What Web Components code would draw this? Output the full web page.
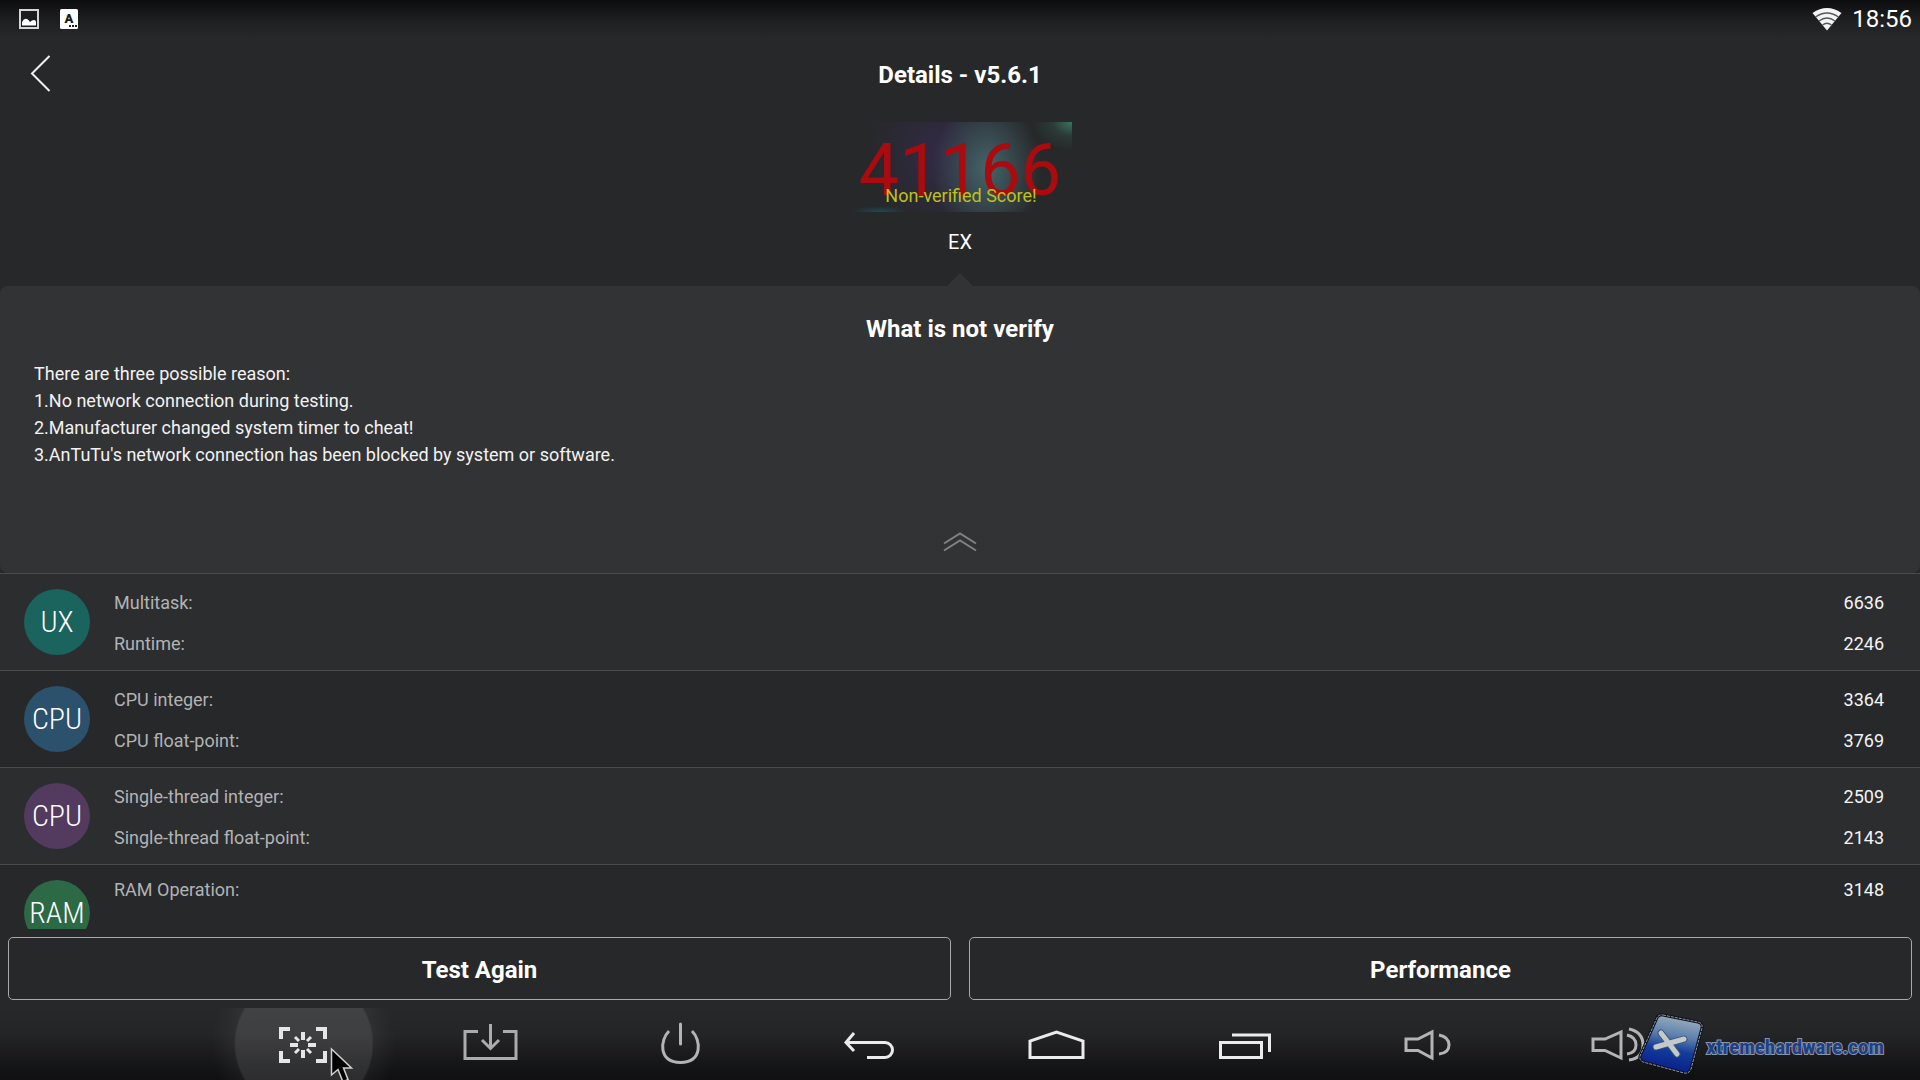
<!DOCTYPE html>
<html lang="en">
<head>
<meta charset="utf-8">
<title>Details - v5.6.1</title>
<style>
html, body { margin: 0; height: 100%; background: #27282a; }
body { font-family: Roboto, "Liberation Sans", sans-serif; color: #fff; overflow: hidden; }
</style>
</head>
<body>
<benchmark-app></benchmark-app>
<script>
const define = (tag, css, html) => customElements.define(tag, class extends HTMLElement {
  constructor() {
    super();
    const t = document.createElement('template');
    t.innerHTML = `<style>*{box-sizing:border-box}svg{display:block}${css}</style>${typeof html === 'function' ? html(this) : html}`;
    this.attachShadow({ mode: 'open' }).append(t.content.cloneNode(true));
  }
});

define('status-bar', `
:host{display:flex;align-items:center;justify-content:space-between;height:38px;flex:none;padding:0 8px 0 18px;
 background:linear-gradient(#0d0d0f,#1d1e20 50%,#27282a)}
div{display:flex;align-items:center}
.left{gap:20px}.right{gap:10px}
time{font-size:24px;line-height:38px}
`, `
<div class="left">
 <svg width="22" height="22" viewBox="0 0 22 22" aria-hidden="true"><rect x="2" y="2" width="18" height="18" fill="#1b1c1e" stroke="#d6d6d6" stroke-width="2"/><path d="M4 17.500V14q2-4 5-3 2 1 3 3 2-2 4-2 2 0 2 3v2.500z" fill="#fff"/></svg>
 <svg width="18" height="20" viewBox="0 0 18 20" aria-hidden="true"><rect width="18" height="20" rx="1.500" fill="#fff"/><text x="9" y="14" font-size="13" font-weight="900" fill="#1a1b1d" text-anchor="middle">A</text><path d="M9 17h2m1 0h2m1 0h2" stroke="#222" stroke-width="2"/></svg>
</div>
<div class="right">
 <svg width="30" height="24" viewBox="0 0 30 24" aria-hidden="true"><path d="M.5 6Q15-4 29.500 6L15 23.500z" fill="#f4f4f4"/><g fill="none" stroke="#55565a" stroke-width="1.300"><path d="M3.500 10Q15 2 26.500 10"/><path d="M7 14Q15 8 23 14"/><path d="M10.500 18Q15 14.500 19.500 18"/></g></svg>
 <time>18:56</time>
</div>`);

define('page-header', `
:host{display:grid;grid-template-columns:80px 1fr 80px;align-items:center;height:72px;flex:none}
button{background:none;border:0;padding:0 0 2px 30px;height:72px;color:inherit}
h1{margin:0;padding-top:2px;text-align:center;font-size:24px;line-height:32px;font-weight:700}
`, `
<button aria-label="Back"><svg width="22" height="38" viewBox="0 0 22 38" fill="none" stroke="#f0f0f0" stroke-width="2"><path d="M19.500 2L2 19.500 19.500 37"/></svg></button>
<h1><slot></slot></h1>`);

define('score-banner', `
:host{display:flex;flex-direction:column;align-items:center;flex:none;padding-top:12px}
.art{display:grid;width:224px;height:90px;justify-items:center;
 background:
 radial-gradient(ellipse 40px 28px at 100% 0,#39755f,#2f4d4480 50%,transparent),
 radial-gradient(ellipse 28px 6px at 14% 100%,#1d4a57,transparent),
 radial-gradient(ellipse 54px 72px at 62% 52%,#466468,#3b5257cc 45%,transparent),
 radial-gradient(ellipse 76px 80px at 42% 35%,#322a46,transparent)}
.art>*{grid-area:1/1}
strong{font-size:72px;line-height:98px;font-weight:400;color:#a90b0e}
span{font-size:18px;line-height:20px;color:#c0c01c;align-self:end;padding:0 0 14px 2px}
p{margin:0;font-size:20px;line-height:60px}
i{width:26px;height:13px;margin-top:1px;background:#323335;clip-path:polygon(50% 0,100% 100%,0 100%)}
`, `<div class="art"><strong><slot name="score"></slot></strong><span><slot name="note"></slot></span></div><p><slot name="device"></slot></p><i></i>`);

define('info-panel', `
:host{display:flex;flex-direction:column;flex:none;padding:24px 34px 9px;background:#323335;border-radius:8px}
h2{margin:0 0 12px;text-align:center;font-size:24px;line-height:38px;font-weight:700}
.text{font-size:18px;line-height:27px;color:#f2f2f2}
button{align-self:center;margin-top:52px;width:60px;height:44px;padding:0;background:none;border:0}
svg{margin:auto}
`, `<h2><slot name="title"></slot></h2><div class="text"><slot></slot></div>
<button aria-label="Collapse"><svg width="34" height="20" viewBox="0 0 34 20" fill="none" stroke="#808183" stroke-width="2"><path d="M1 11.500L17 1.500 33 11.500M1 18.500L17 8.500 33 18.500"/></svg></button>`);

define('score-row', `
:host{display:flex;align-items:flex-start;flex:none;border-top:1px solid #4b4c4e;padding:0 36px 0 24px;min-height:97px;background:#27282a}
:host([shade]){background:#2c2d2f}
.badge{width:66px;height:66px;margin:15px 24px 0 0;border-radius:50%;background:var(--tone);flex:none;
 font:300 30px/66px "Roboto Condensed",Roboto,sans-serif;display:flex;justify-content:center}
dl{flex:1;margin:0;padding-top:8px}
:host([tight]) dl{padding-top:4px}
dl div{display:flex;justify-content:space-between;font-size:18px;line-height:41px}
dt{color:#b2b3b4}dd{margin:0;color:#f4f4f4}
`, el => `<span class="badge">${el.getAttribute('badge')}</span><dl>${el.getAttribute('items').split('|').map(s => { const [k, v] = s.split('='); return `<div><dt>${k}:</dt><dd>${v}</dd></div>`; }).join('')}</dl>`);

define('score-list', `:host{display:flex;flex-direction:column;flex:1;min-height:0;overflow:hidden}`, `<slot></slot>`);

define('action-bar', `
:host{display:flex;gap:18px;padding:8px;flex:none}
button{flex:1;height:63px;padding:2px 0 0;border:1px solid #a8a9aa;border-radius:5px;background:none;color:#fff;font:700 24px/32px Roboto,"Liberation Sans",sans-serif}
`, `<button>Test Again</button><button>Performance</button>`);

const icon = (label, tone, body, cls = '') => `<button aria-label="${label}" class="${cls}"><svg width="72" height="72" viewBox="-36 -36 72 72" fill="none" stroke="${tone}" stroke-width="3">${body}</svg></button>`;
define('nav-bar', `
:host{display:flex;justify-content:center;height:72px;flex:none;overflow:hidden;background:linear-gradient(#27282a,#242527 35%,#121214 90%,#101012)}
button{flex:0 1 188px;height:72px;padding:0;border:0;background:none;display:flex;justify-content:center}
.active{background:radial-gradient(circle at 51% 50%,#ffffff1f 67px,#ffffff1f 68px,#ffffff0b 70px,transparent 92px)}
`,
 icon('Screenshot', '#e6e6e6', `<path d="M-21-5v-10h9M14-15h9v10M23 7v10h-9M-12 17h-9V7" stroke-width="4"/><path d="M1-12v8M1 6v8M-12 1h8M6 1h8" stroke-width="4"/><path d="M-7-7l4 4M9-7l-4 4M-7 9l4-4M9 9l-4-4"/>`, 'active')
 + icon('Save', '#acacac', `<path d="M-12-12.500h-13v27h51v-27h-13M.500-20V4M-8-4L.500 4.500 9-4"/>`)
 + icon('Power', '#b4b4b4', `<path d="M-9-13C-18-4-20 18 2.500 18.500 25 18 23-4 14-13"/><path d="M2.500-20V0" stroke-linecap="round"/>`)
 + icon('Back', '#ebebeb', `<path d="M-12-11L-20-1.500-12 7M-20-1.500H19a7.500 7.500 0 0 1 0 15H1"/>`)
 + icon('Home', '#ebebeb', `<path d="M-24 13.500V-3L2.500-12 29-3V13.500z"/>`)
 + icon('Recent apps', '#ebebeb', `<path d="M-21.500-1.500h41v15h-41zM-10-9H27.500V8"/>`)
 + icon('Volume down', '#b4b4b4', `<path d="M-24-5h12L2-12v26L-12 6.500h-12zM9-9Q19-7 19 1T9 10"/>`)
 + icon('Volume up', '#b4b4b4', `<path d="M-25-5h12L3-12v26L-13 6.500h-12zM9-9Q18-7 18 1T9 10M11-15Q25-12 25 1T11 16"/>`));

define('site-mark', `
:host{position:absolute;right:36px;bottom:0;display:flex;align-items:center;gap:2px;height:72px}
span{font:700 21px/24px "Roboto Condensed",Roboto,sans-serif;color:#1c3f86;-webkit-text-stroke:2px #8a94a8;paint-order:stroke fill;padding-top:6px}
`, `<svg width="66" height="72" viewBox="0 0 66 72" aria-hidden="true">
<defs><linearGradient id="g" x1=".6" y1="0" x2=".4" y2="1"><stop offset="0" stop-color="#9fb0bd"/><stop offset=".35" stop-color="#5b80ae"/><stop offset=".6" stop-color="#123c9a"/><stop offset="1" stop-color="#071a8c"/></linearGradient></defs>
<path d="M25 7L60 14Q65 15 64 20L53 61Q51 66 46 65L5 54Q1 52 2 48L18 12Q20 6 25 7z" fill="url(#g)" stroke="#10131c" stroke-width="3"/>
<path d="M25 7L60 14Q65 15 64 20L53 61Q51 66 46 65L5 54Q1 52 2 48L18 12Q20 6 25 7z" fill="none" stroke="#8b96aa" stroke-width="1" stroke-dasharray="3 1"/>
<path d="M23 25L39 46M18 39L46 31" stroke="#3c5576" stroke-width="7" stroke-linecap="round"/><path d="M23 25L39 46M18 39L46 31" stroke="#c6c9cc" stroke-width="5" stroke-linecap="round"/></svg><span>xtremehardware.com</span>`);

define('mouse-pointer', `:host{position:absolute;left:330px;bottom:0;height:33px;overflow:hidden}`,
`<svg width="24" height="37" viewBox="0 0 24 37" aria-hidden="true"><path d="M1.500 2V28L8 22.500 13 35 18 32.500 13.500 21H21.500z" fill="#000" stroke="#d0d0d0" stroke-width="1.500"/></svg>`);

define('benchmark-app', `
:host{position:relative;display:flex;flex-direction:column;height:100vh;overflow:hidden}
p{margin:0}
`, `
<status-bar></status-bar>
<page-header>Details - v5.6.1</page-header>
<score-banner><span slot="score">41166</span><span slot="note">Non-verified Score!</span><span slot="device">EX</span></score-banner>
<info-panel><span slot="title">What is not verify</span>
<p>There are three possible reason:</p><p>1.No network connection during testing.</p><p>2.Manufacturer changed system timer to cheat!</p><p>3.AnTuTu's network connection has been blocked by system or software.</p></info-panel>
<score-list>
<score-row shade badge="UX" items="Multitask=6636|Runtime=2246" style="--tone:#1b635d"></score-row>
<score-row badge="CPU" items="CPU integer=3364|CPU float-point=3769" style="--tone:#2b516c"></score-row>
<score-row shade badge="CPU" items="Single-thread integer=2509|Single-thread float-point=2143" style="--tone:#523b5f"></score-row>
<score-row tight badge="RAM" items="RAM Operation=3148" style="--tone:#2c6945"></score-row>
</score-list>
<action-bar></action-bar>
<nav-bar></nav-bar>
<site-mark></site-mark>
<mouse-pointer></mouse-pointer>`);
</script>
</body>
</html>
